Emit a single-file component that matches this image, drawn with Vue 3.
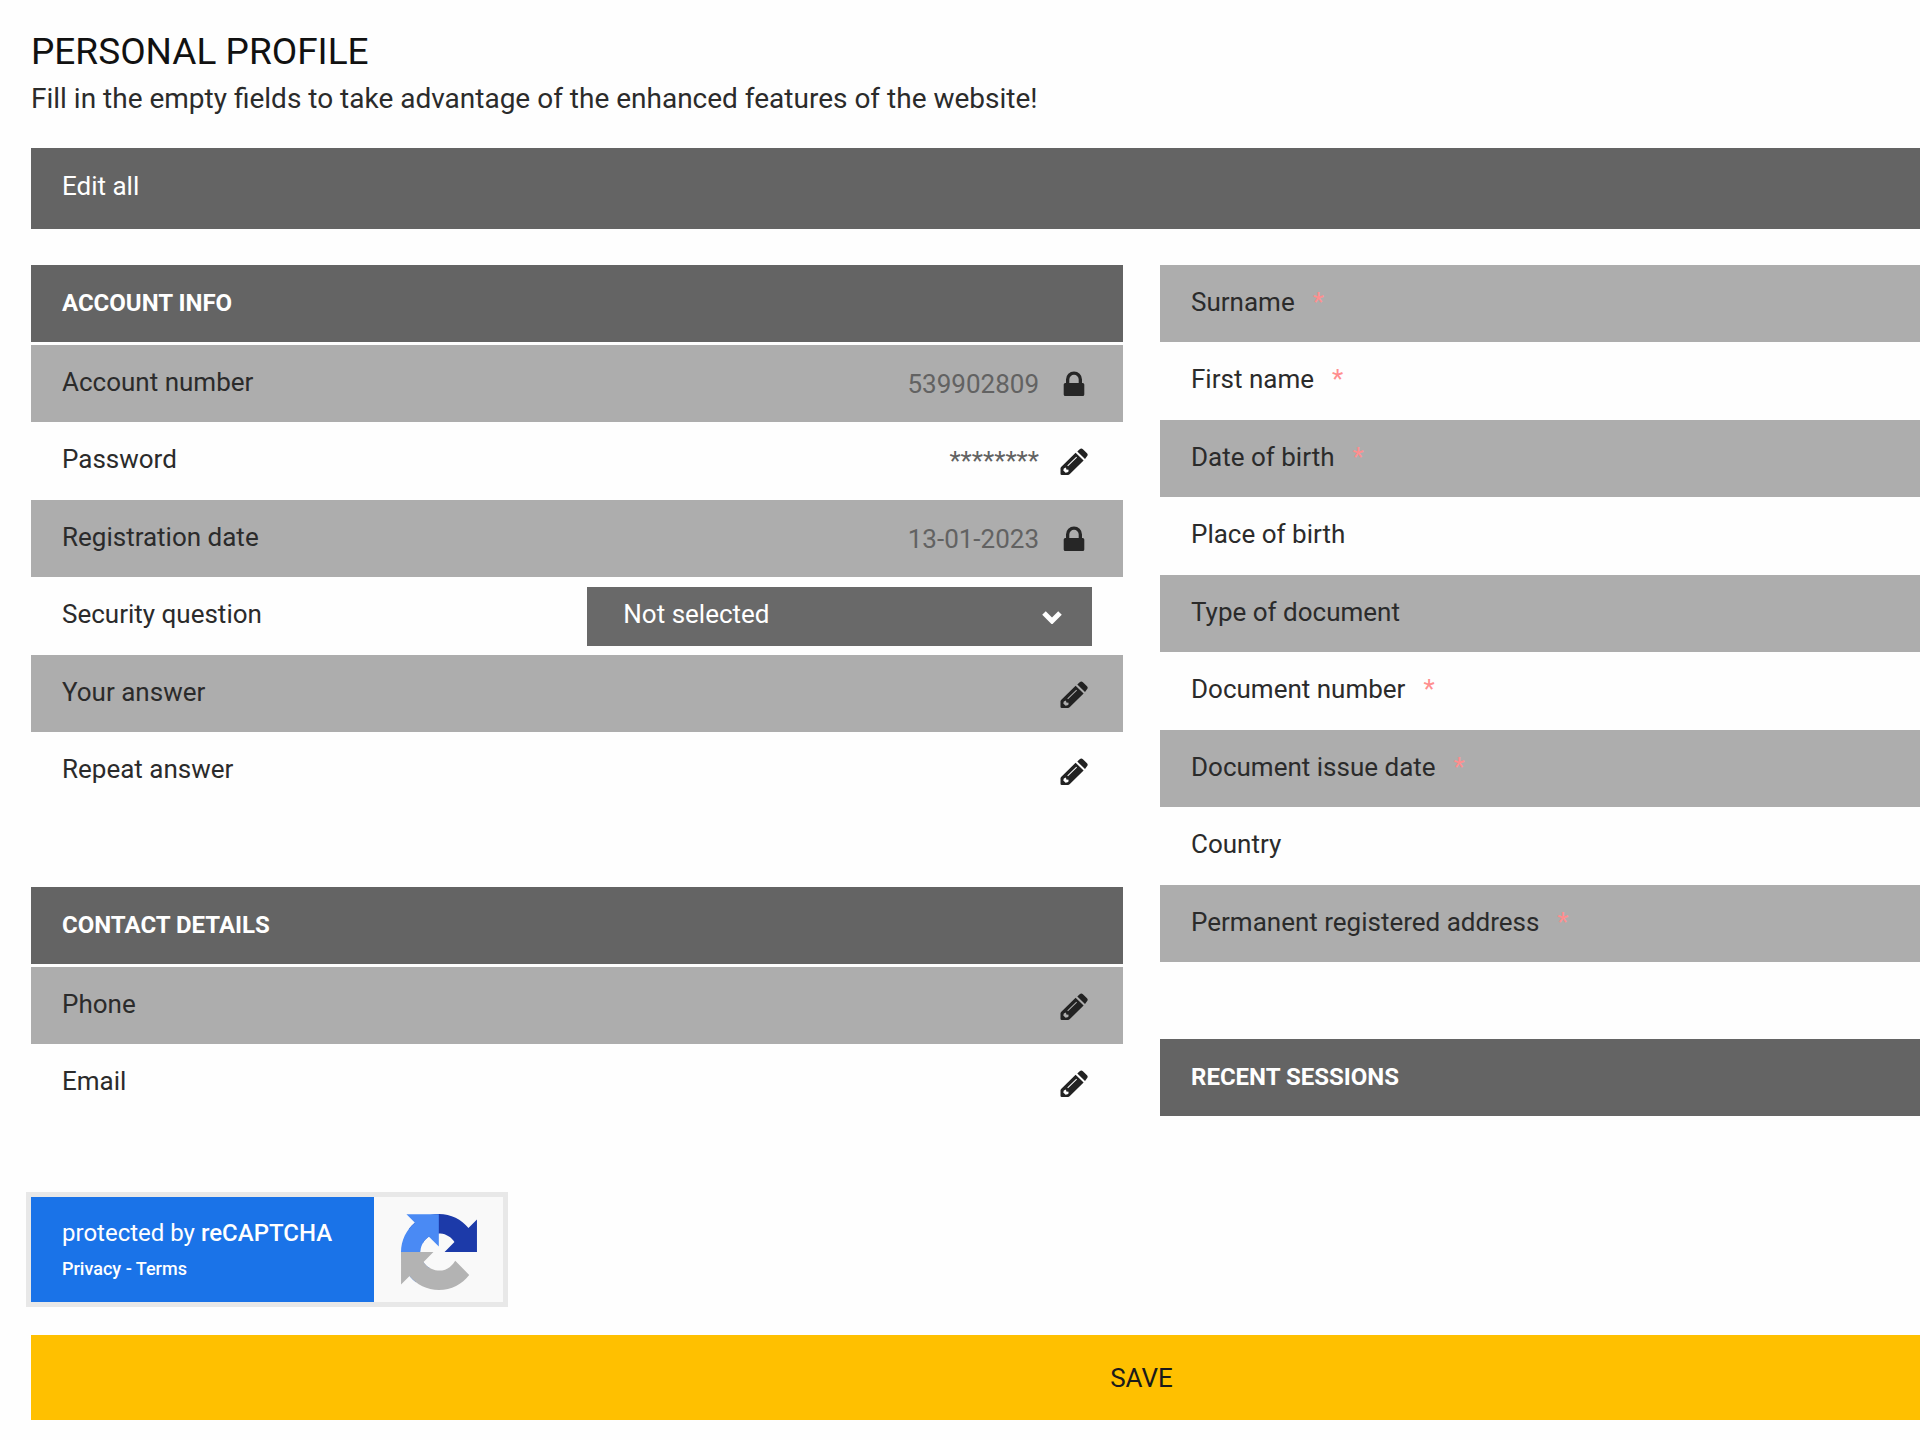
<script setup>
import { ref } from 'vue'

const accountRows = ref([
  { id: 'account-number', label: 'Account number', value: '539902809', kind: 'locked' },
  { id: 'password', label: 'Password', value: '********', kind: 'editable' },
  { id: 'registration-date', label: 'Registration date', value: '13-01-2023', kind: 'locked' },
  { id: 'security-question', label: 'Security question', value: 'Not selected', kind: 'select' },
  { id: 'your-answer', label: 'Your answer', value: '', kind: 'editable' },
  { id: 'repeat-answer', label: 'Repeat answer', value: '', kind: 'editable' },
])

const contactRows = ref([
  { id: 'phone', label: 'Phone', value: '', kind: 'editable' },
  { id: 'email', label: 'Email', value: '', kind: 'editable' },
])

const groups = [
  { title: 'ACCOUNT INFO', rows: accountRows },
  { title: 'CONTACT DETAILS', rows: contactRows },
]

const personalRows = ref([
  { id: 'surname', label: 'Surname', required: true, value: '' },
  { id: 'first-name', label: 'First name', required: true, value: '' },
  { id: 'birth-date', label: 'Date of birth', required: true, value: '' },
  { id: 'birth-place', label: 'Place of birth', required: false, value: '' },
  { id: 'document-type', label: 'Type of document', required: false, value: '' },
  { id: 'document-number', label: 'Document number', required: true, value: '' },
  { id: 'document-date', label: 'Document issue date', required: true, value: '' },
  { id: 'country', label: 'Country', required: false, value: '' },
  { id: 'address', label: 'Permanent registered address', required: true, value: '' },
])
</script>

<template>
  <main class="page">
    <form class="profile" @submit.prevent>
      <header class="intro">
        <h1 class="title">PERSONAL PROFILE</h1>
        <p class="subtitle">Fill in the empty fields to take advantage of the enhanced features of the website!</p>
      </header>

      <button type="button" class="edit-all">Edit all</button>

      <div class="columns">
        <div class="column">
          <section v-for="group in groups" :key="group.title" class="group">
            <h2 class="group-title titled">{{ group.title }}</h2>
            <div class="rows">
              <div v-for="row in group.rows.value" :key="row.id" class="row">
                <label class="label" :for="row.id">{{ row.label }}</label>
                <div v-if="row.kind === 'select'" class="select-box">
                  <select :id="row.id" v-model="row.value" class="select">
                    <option>Not selected</option>
                  </select>
                  <svg class="chevron" viewBox="0 0 20 13" aria-hidden="true">
                    <path d="M2 2l8 8 8-8" fill="none" stroke="#fff" stroke-width="5" />
                  </svg>
                </div>
                <template v-else>
                  <input :id="row.id" v-model="row.value" class="value" type="text" :readonly="row.kind === 'locked'" />
                  <span v-if="row.kind === 'locked'" class="icon-box">
                    <svg class="icon" viewBox="0 0 28 28" aria-hidden="true">
                      <path
                        fill="#262626"
                        fill-rule="evenodd"
                        d="M6 13V9.500a8 8 0 0 1 16 0V13h.7q1.600 0 1.600 1.600v9.800q0 1.600-1.600 1.600H5.300q-1.600 0-1.600-1.600v-9.800Q3.700 13 5.300 13zM9.300 13h9.400V9.500a4.700 4.700 0 0 0-9.400 0z"
                      />
                    </svg>
                  </span>
                  <button v-else type="button" class="icon-box pencil" :aria-label="'Edit ' + row.label">
                    <svg class="icon" viewBox="0 0 28 28" aria-hidden="true">
                      <path
                        fill="#222"
                        fill-rule="evenodd"
                        d="M15.600 4.800L23.600 12.600 9.600 26.300Q8.900 27 8 27H1.800Q.5 27 .5 25.800V20.300Q.5 19.500 1.100 18.900zM3.800 20.600L3.300 22.400 5.600 24.700 8.300 24 8.600 21.700 6.300 21.400 6 19.600zM7.300 17.600L8 18.300 17 9.400 16.300 8.700z"
                      />
                      <path fill="#222" d="M17.300 3.600L19.700 1.300Q21.300-.1 22.900 1.300L27 5.200Q28.400 6.700 27 8.200L25 11.100z" />
                    </svg>
                  </button>
                </template>
              </div>
            </div>
          </section>
        </div>

        <div class="column">
          <section class="group">
            <div class="rows">
              <div v-for="row in personalRows" :key="row.id" class="row">
                <label class="label" :for="row.id">{{ row.label }}<span v-if="row.required" class="required">*</span></label>
                <input :id="row.id" v-model="row.value" class="value" type="text" />
              </div>
            </div>
          </section>
          <section class="group">
            <h2 class="group-title">RECENT SESSIONS</h2>
          </section>
        </div>
      </div>

      <aside class="captcha">
        <div class="captcha-text">
          <p class="captcha-line">protected by <strong>reCAPTCHA</strong></p>
          <p class="captcha-links"><a href="#privacy">Privacy</a> - <a href="#terms">Terms</a></p>
        </div>
        <div class="captcha-mark">
          <svg class="captcha-logo" viewBox="0 0 64 64" aria-hidden="true">
            <path fill="#1c3aa9" d="M64 31.955l-.033-1.370V4.687l-7.160 7.160C50.948 4.674 42.033.093 32.050.093c-10.400 0-19.622 4.960-25.458 12.640l11.736 11.860a15.550 15.550 0 0 1 4.754-5.334c2.050-1.600 4.952-2.906 8.968-2.906.485 0 .860.057 1.135.163 4.976.393 9.288 3.140 11.828 7.124l-8.307 8.307L64 31.953" />
            <path fill="#4a8af4" d="M31.862.094l-1.370.033H4.594l7.160 7.160C4.580 13.147 0 22.060 0 32.046c0 10.400 4.960 19.622 12.640 25.458L24.500 45.768a15.550 15.550 0 0 1-5.334-4.754c-1.600-2.050-2.906-4.952-2.906-8.968 0-.485.057-.860.163-1.135.393-4.976 3.140-9.288 7.124-11.828l8.307 8.307L31.860.095" />
            <path fill="#b3b3b3" d="M.001 32.045l.033 1.370v25.898l7.160-7.160c5.860 7.173 14.774 11.754 24.760 11.754 10.400 0 19.622-4.960 25.458-12.640l-11.736-11.860a15.550 15.550 0 0 1-4.754 5.334c-2.050 1.600-4.952 2.906-8.968 2.906-.485 0-.860-.057-1.135-.163-4.976-.393-9.288-3.140-11.828-7.124l8.307-8.307c-10.522.040-22.400.066-27.295-.005" />
          </svg>
        </div>
      </aside>

      <button type="submit" class="save">SAVE</button>
    </form>
  </main>
</template>

<style>
body {
  margin: 0;
  background: #fefefe;
}
</style>

<style scoped>
.page {
  overflow: hidden;
  padding: 30px 0 20px 31px;
  box-sizing: border-box;
  color: #2b2b2b;
  font-family: Roboto, "Liberation Sans", sans-serif;
  font-size: 26px;
}

/* The form is wider than the window and runs off its right edge. */
.profile {
  display: flex;
  flex-direction: column;
  width: calc(100% + 332px);
}

h1,
h2,
p {
  margin: 0;
}

button,
input,
select {
  margin: 0;
  padding: 0;
  border: 0;
  border-radius: 0;
  background: none;
  color: inherit;
  font: inherit;
}

.title {
  color: #111;
  font-size: 37px;
  font-weight: 400;
  line-height: 44px;
}

.subtitle {
  font-size: 28px;
  line-height: 50px;
}

.edit-all {
  height: 81px;
  margin-top: 24px;
  padding: 0 31px 6px;
  background: #646464;
  color: #fff;
  text-align: left;
}

.columns {
  display: flex;
  gap: 37px;
  margin-top: 36px;
}

.column {
  display: flex;
  flex: 1;
  flex-direction: column;
  gap: 77px;
  min-width: 0;
}

.group-title {
  padding: 0 31px;
  background: #646464;
  color: #fff;
  font-size: 24px;
  font-weight: 700;
  line-height: 77px;
}

.titled {
  margin-bottom: 3px;
}

.row {
  display: flex;
  align-items: center;
  height: 78px;
  padding: 0 31px;
}

.row:nth-child(odd) {
  height: 77px;
  background: #adadad;
}

.label {
  flex: none;
  padding-bottom: 4px;
}

.required {
  margin-left: 18px;
  color: #ff8f8f;
}

.value {
  flex: 1;
  min-width: 0;
  margin-right: 17px;
  outline: none;
  color: #626262;
  text-align: right;
}

.icon-box {
  display: flex;
  flex: none;
  align-items: center;
  justify-content: center;
  width: 36px;
  height: 36px;
}

.pencil {
  padding-top: 2px;
}

.icon {
  flex: none;
  width: 28px;
  height: 28px;
}

.select-box {
  position: relative;
  width: 49%;
  margin-left: auto;
}

.select {
  display: block;
  width: 100%;
  height: 59px;
  padding: 0 60px 4px 36px;
  appearance: none;
  background: #696969;
  color: #fff;
}

.chevron {
  position: absolute;
  top: 24px;
  right: 30px;
  width: 20px;
  height: 13px;
  pointer-events: none;
}

.captcha {
  display: flex;
  align-self: flex-start;
  margin: 70px 0 28px -5px;
  border: 5px solid #e8e8e8;
  background: #f9f9f9;
  color: #fff;
}

.captcha-text {
  box-sizing: border-box;
  width: 343px;
  padding: 20px 0 13px 31px;
  background: #1a73e8;
}

.captcha-line {
  font-size: 24px;
  line-height: 32px;
}

.captcha-line strong {
  font-weight: 500;
}

.captcha-links {
  font-size: 18px;
  font-weight: 500;
  line-height: 40px;
}

.captcha-links a {
  color: inherit;
  text-decoration: none;
}

.captcha-mark {
  display: flex;
  align-items: center;
  justify-content: center;
  width: 129px;
  padding-top: 4px;
}

.captcha-logo {
  width: 76px;
  height: 76px;
}

.save {
  height: 85px;
  background: #ffc000;
  color: #1a1a1a;
}
</style>
